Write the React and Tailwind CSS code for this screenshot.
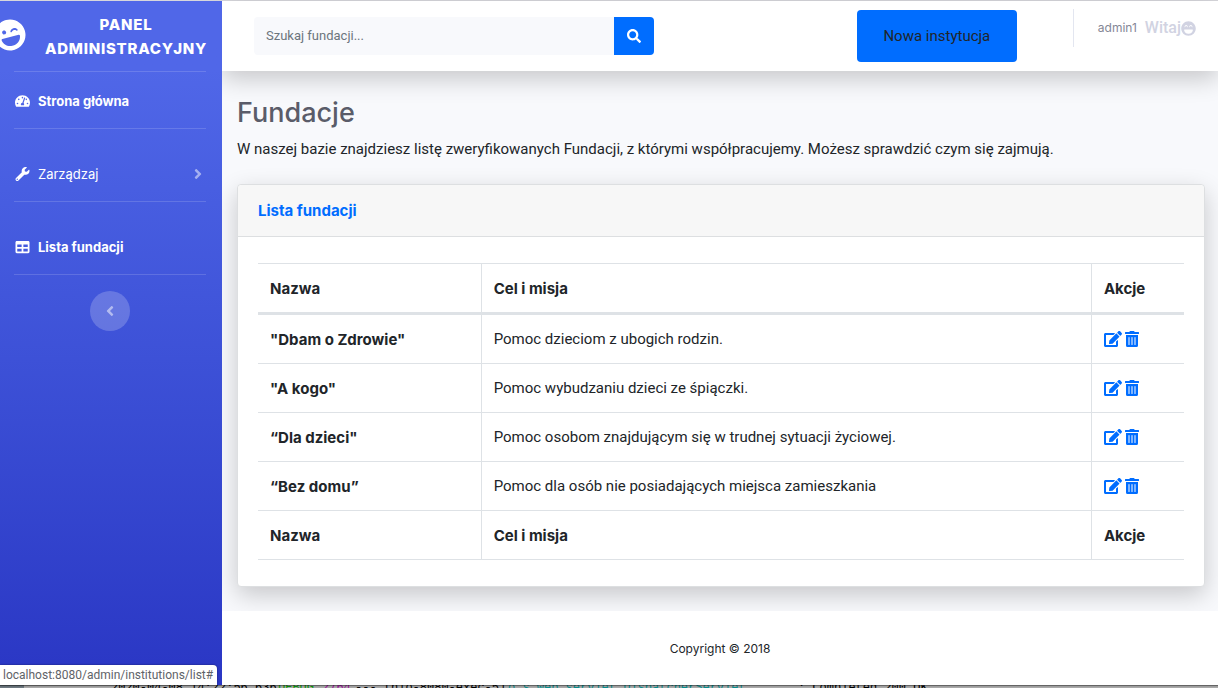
import { FaAngleLeft, FaAngleRight, FaEdit, FaLaughWink, FaLaughBeam, FaSearch, FaTable, FaTachometerAlt, FaTrashAlt, FaWrench } from "react-icons/fa";

const rows = [
  { name: '"Dbam o Zdrowie"', mission: "Pomoc dzieciom z ubogich rodzin." },
  { name: '"A kogo"', mission: "Pomoc wybudzaniu dzieci ze śpiączki." },
  { name: "“Dla dzieci\"", mission: "Pomoc osobom znajdującym się w trudnej sytuacji życiowej." },
  { name: "“Bez domu”", mission: "Pomoc dla osób nie posiadających miejsca zamieszkania" },
];

function Divider() {
  return <hr className="mr-4 ml-[14px] border-t border-white/15" />;
}

function NavItem({ icon: Icon, label, bold, chevron }) {
  return (
    <a
      href="#"
      className={`flex items-center px-[15px] text-white ${bold ? "font-bold" : "font-normal"}`}
    >
      <Icon className="mr-2 h-[14px] w-[15px] shrink-0" />
      <span className="flex-1 text-[13px] leading-5">{label}</span>
      {chevron && <FaAngleRight className="mr-1 h-4 w-[10px] text-white/50" />}
    </a>
  );
}

function Sidebar() {
  return (
    <nav className="relative z-10 w-[222px] shrink-0 bg-linear-to-b from-[#5067e8] from-10% to-[#2a36c4] to-100% pt-3">
      <a href="#" className="flex h-12 items-center text-white">
        <FaLaughWink className="mb-1 -ml-[6px] h-8 w-8 shrink-0 -rotate-15" />
        <span className="flex-1 pl-1 text-center text-[15px] leading-6 font-extrabold tracking-wider uppercase">
          Panel Administracyjny
        </span>
      </a>
      <div className="pt-[10px]"><Divider /></div>
      <div className="pt-[19px] pb-[17px]"><NavItem icon={FaTachometerAlt} label="Strona główna" bold /></div>
      <Divider />
      <div className="pt-[35px] pb-[17px]"><NavItem icon={FaWrench} label="Zarządzaj" chevron /></div>
      <Divider />
      <div className="pt-[35px] pb-[17px]"><NavItem icon={FaTable} label="Lista fundacji" bold /></div>
      <Divider />
      <div className="flex justify-center pt-4 pr-0.5">
        <button aria-label="Zwiń menu" className="flex size-10 items-center justify-center rounded-full bg-white/20 text-white/50">
          <FaAngleLeft className="size-4" />
        </button>
      </div>
    </nav>
  );
}

function Topbar() {
  return (
    <header className="relative flex h-[70px] shrink-0 items-start bg-white pr-[22px] pl-8 shadow-[0_8px_24px_rgba(0,0,0,0.2)]">
      <form className="mt-4 flex h-[38px] w-[400px]" onSubmit={(e) => e.preventDefault()}>
        <input
          type="text"
          aria-label="Szukaj fundacji"
          placeholder="Szukaj fundacji..."
          className="min-w-0 flex-1 rounded-l bg-[#f8f9fc] px-3 font-['Roboto',sans-serif] text-[13px] text-[#6e707e] outline-none placeholder:text-[#6c757d]"
        />
        <button aria-label="Szukaj" className="flex w-10 items-center justify-center rounded-r bg-[#006dff] text-white">
          <FaSearch className="size-[14px]" />
        </button>
      </form>
      <div className="ml-auto flex">
        <button className="mt-[9px] h-[52px] w-40 rounded bg-[#006dff] font-['Roboto',sans-serif] text-[15px] text-[#212529]">Nowa instytucja</button>
        <div className="mt-2 ml-14 flex h-[38px] items-center border-l border-[#e3e6f0] pl-6">
          <span className="mr-2 text-[12px] text-[#858796]">admin1</span>
          <span className="font-['Roboto',sans-serif] text-[16px] font-medium text-[#d1d3e2]">Witaj</span>
          <FaLaughBeam className="size-[15px] text-[#d1d3e2]" />
        </div>
      </div>
    </header>
  );
}

const line = "border-y border-[#dee2e6] px-3";
const cell = `${line} pt-[13px] pb-[11px]`;
const inner = "border-r";

function HeadingCells() {
  return (
    <>
      <th className={`${cell} ${inner}`}>Nazwa</th>
      <th className={`${cell} ${inner}`}>Cel i misja</th>
      <th className={cell}>Akcje</th>
    </>
  );
}

function FoundationTable() {
  return (
    <table className="w-full table-fixed border-collapse text-left text-[15px] leading-6 text-[#212529]">
      <colgroup>
        <col className="w-[24.1%]" />
        <col />
        <col className="w-[10%]" />
      </colgroup>
      <thead className="border-b-3 border-[#dee2e6]">
        <tr><HeadingCells /></tr>
      </thead>
      <tbody>
        {rows.map((row) => (
          <tr key={row.name}>
            <th className={`${cell} ${inner}`}>{row.name}</th>
            <td className={`${line} ${inner} py-3 font-['Roboto',sans-serif]`}>{row.mission}</td>
            <td className={`${line} py-3`}>
              <div className="flex items-center gap-[3px] text-[#006dff]">
                <a href="#" aria-label="Edytuj"><FaEdit className="h-4 w-[18px]" /></a>
                <a href="#" aria-label="Usuń"><FaTrashAlt className="h-4 w-[14px]" /></a>
              </div>
            </td>
          </tr>
        ))}
      </tbody>
      <tfoot>
        <tr><HeadingCells /></tr>
      </tfoot>
    </table>
  );
}

function ConsoleStrip() {
  return (
    <div className="flex h-[3px] shrink-0 overflow-hidden bg-linear-to-r from-[#6d7880] from-2% to-[#a9a9a9] to-2% pl-[111px] font-['Liberation_Mono',monospace] text-[12px] leading-[7px] whitespace-nowrap text-black">
      <span className="w-[167px] shrink-0">2020-04-08 14:22:56.636</span>
      <span className="w-11 shrink-0 text-[#0a9a0a]">DEBUG</span>
      <span className="w-[33px] shrink-0 text-[#a010a0]">2764</span>
      <span className="w-[153px] shrink-0">--- [nio-8080-exec-5]</span>
      <span className="w-[290px] shrink-0 text-[#0a8f8f]">o.s.web.servlet.DispatcherServlet</span>
      <span className="shrink-0">: Completed 200 OK</span>
    </div>
  );
}

export default function App() {
  return (
    <div className="flex h-screen flex-col overflow-hidden bg-[#a9a9a9] font-['Inter','Liberation_Sans',sans-serif]">
      <div className="relative flex min-h-0 flex-1 border-t border-[#d7d7dc] shadow-[0_1px_1px_rgba(0,0,0,0.4)]">
        <Sidebar />
        <div className="flex min-w-0 flex-1 flex-col bg-[#f8f9fc]">
          <Topbar />
          <main className="flex-1 pt-[25px] pr-[13px] pl-[15px]">
            <h1 className="text-[27px] leading-[34px] font-medium text-[#5a5c69]">Fundacje</h1>
            <p className="mt-[7px] font-['Roboto',sans-serif] text-[15px] leading-6 text-[#212529]">
              W naszej bazie znajdziesz listę zweryfikowanych Fundacji, z którymi współpracujemy. Możesz sprawdzić czym się zajmują.
            </p>
            <section className="mt-[23px] rounded border border-[#dddfe1] bg-white shadow-[0_8px_24px_rgba(0,0,0,0.2)]">
              <h2 className="rounded-t border-b border-[#dddfe1] bg-[#f7f7f7] px-5 py-[14px] text-[15px] leading-[23px] font-bold text-[#006dff]">
                Lista fundacji
              </h2>
              <div className="px-5 py-[26px]"><FoundationTable /></div>
            </section>
          </main>
          <footer className="flex h-[74px] shrink-0 items-center justify-center bg-white pt-0.5 text-[12px] text-[#212529]">
            Copyright © 2018
          </footer>
        </div>
        <div className="absolute bottom-0 left-0 z-20 rounded-tr bg-white py-0.5 pr-1 pl-[3px] font-['Roboto',sans-serif] text-[12px] leading-4 text-[#5f6368] shadow-[0_0_2px_rgba(0,0,0,0.5)]">
          localhost:8080/admin/institutions/list#
        </div>
      </div>
      <ConsoleStrip />
    </div>
  );
}
